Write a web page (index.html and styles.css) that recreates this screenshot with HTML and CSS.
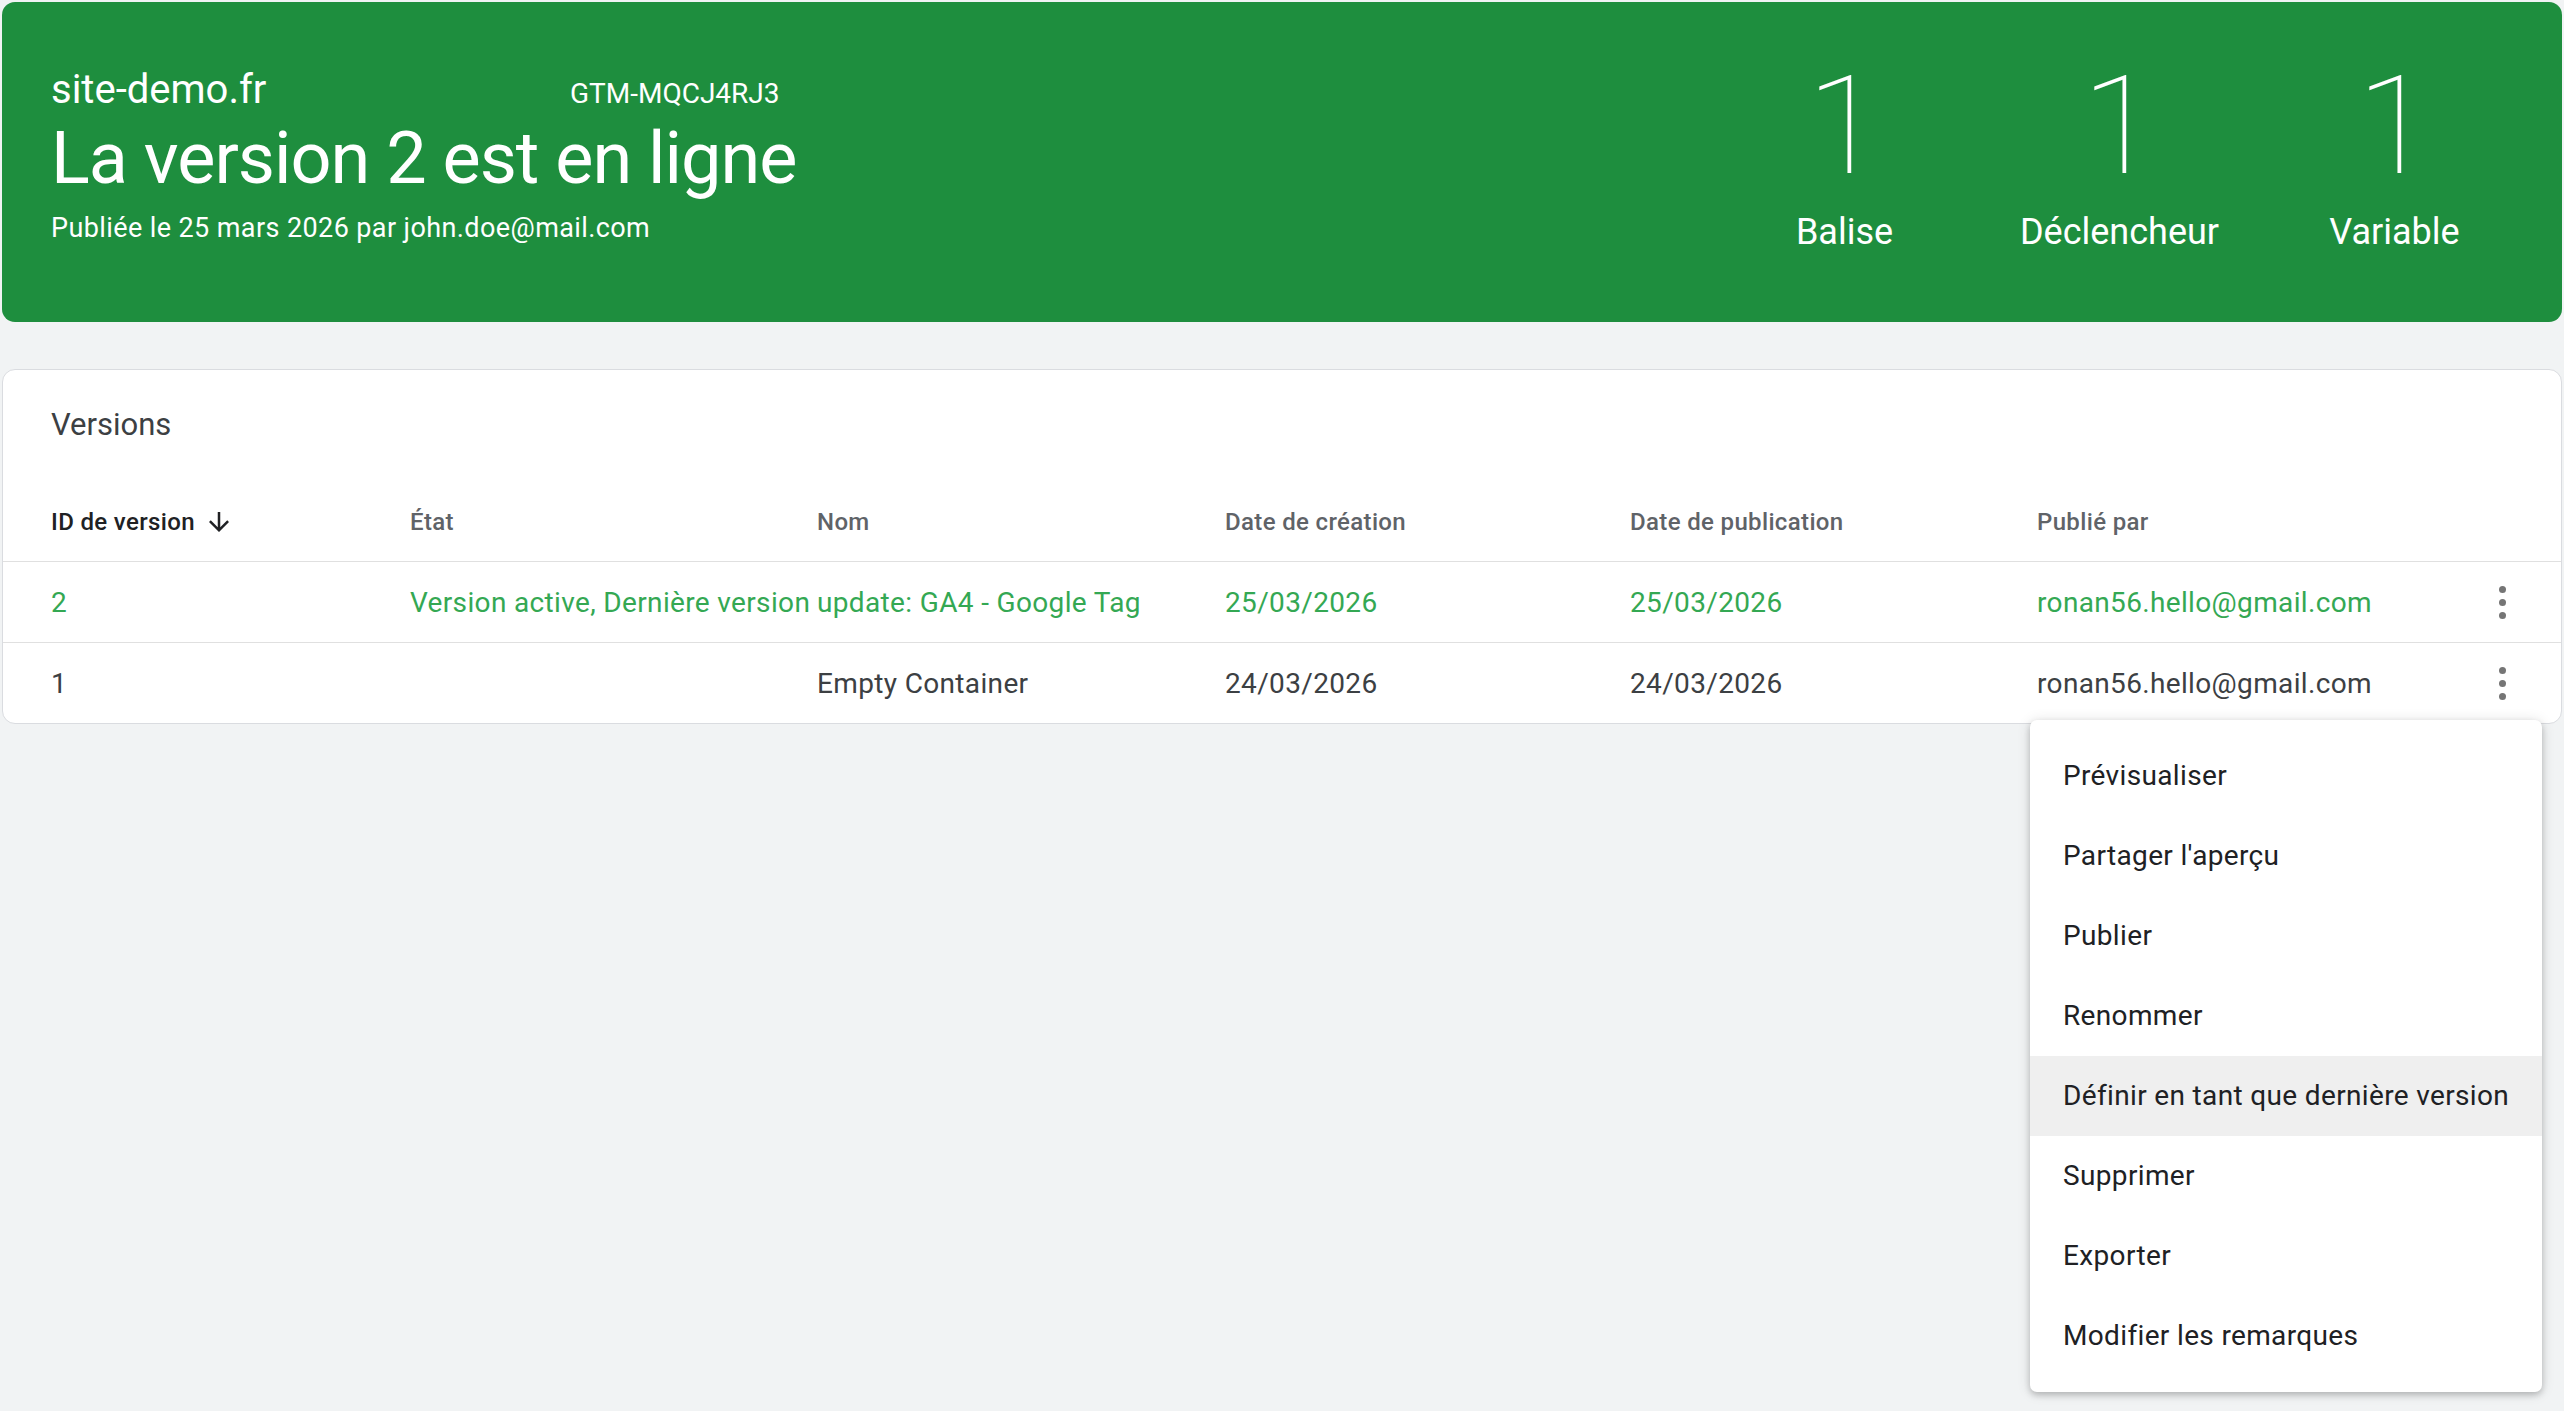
FILE: index.html
```html
<!DOCTYPE html>
<html lang="fr">

<head>
    <meta charset="UTF-8">
    <meta name="viewport" content="width=device-width, initial-scale=1.0">
    <title>Versions - site-demo.fr</title>
    <link rel="stylesheet" href="styles.css">
</head>

<body>

    <div class="page">
        <header class="banner">
            <div class="banner-info">
                <div class="banner-top">
                    <span class="site-name">site-demo.fr</span>
                    <span class="container-id">GTM-MQCJ4RJ3</span>
                </div>
                <h1 class="banner-title">La version 2 est en ligne</h1>
                <div class="banner-sub">Publiée le 25 mars 2026 par john.doe@mail.com</div>
            </div>

            <div class="stats">
                <div class="stat">
                    <div class="stat-num">1</div>
                    <div class="stat-label">Balise</div>
                </div>
                <div class="stat">
                    <div class="stat-num">1</div>
                    <div class="stat-label">Déclencheur</div>
                </div>
                <div class="stat">
                    <div class="stat-num">1</div>
                    <div class="stat-label">Variable</div>
                </div>
            </div>
        </header>

        <section class="card">
            <h2 class="card-title">Versions</h2>

            <div class="row head">
                <div class="cell sorted">ID de version
                    <svg class="sort-icon" viewBox="0 0 24 24"><path d="M20 12l-1.41-1.41L13 16.17V4h-2v12.17l-5.58-5.59L4 12l8 8 8-8z"/></svg>
                </div>
                <div class="cell">État</div>
                <div class="cell">Nom</div>
                <div class="cell">Date de création</div>
                <div class="cell">Date de publication</div>
                <div class="cell">Publié par</div>
                <div class="cell"></div>
            </div>

            <div class="row live">
                <div class="cell">2</div>
                <div class="cell">Version active, Dernière version</div>
                <div class="cell">update: GA4 - Google Tag</div>
                <div class="cell">25/03/2026</div>
                <div class="cell">25/03/2026</div>
                <div class="cell">ronan56.hello@gmail.com</div>
                <div class="cell kebab"><span></span><span></span><span></span></div>
            </div>

            <div class="row last">
                <div class="cell">1</div>
                <div class="cell"></div>
                <div class="cell">Empty Container</div>
                <div class="cell">24/03/2026</div>
                <div class="cell">24/03/2026</div>
                <div class="cell">ronan56.hello@gmail.com</div>
                <div class="cell kebab"><span></span><span></span><span></span></div>
            </div>
        </section>

        <!-- menu opened from the kebab of version 1 -->
        <ul class="menu">
            <li>Prévisualiser</li>
            <li>Partager l'aperçu</li>
            <li>Publier</li>
            <li>Renommer</li>
            <li class="hover">Définir en tant que dernière version</li>
            <li>Supprimer</li>
            <li>Exporter</li>
            <li>Modifier les remarques</li>
        </ul>
    </div>

</body>

</html>
```

FILE: styles.css
```css
body {
    margin: 0;
    padding: 0;
    font-family: Roboto, "Liberation Sans", sans-serif;
    background-color: #f1f3f4;
    color: #202124;
}

.page {
    position: relative;
    min-height: 100vh;
    box-sizing: border-box;
    padding: 2px;
}

/* green banner */
.banner {
    height: 320px;
    box-sizing: border-box;
    display: flex;
    justify-content: space-between;
    align-items: flex-start;
    padding: 55px 30px 0 49px;
    background-color: #1e8e3e;
    color: #fff;
    border-radius: 13px;
    margin-bottom: 47px;
}

.banner-info {
    padding-top: 9px;
}

.banner-top {
    display: flex;
    align-items: baseline;
}

.site-name {
    width: 519px;
    font-size: 40px;
    line-height: 48px;
}

.container-id {
    font-size: 28px;
}

.banner-title {
    margin: 1px 0 0;
    font-size: 72px;
    font-weight: 400;
    line-height: 88px;
    letter-spacing: -1px;
}

.banner-sub {
    margin-top: 7px;
    font-size: 27px;
    line-height: 36px;
    letter-spacing: 0.4px;
}

.stats {
    display: flex;
}

.stat {
    width: 275px;
    text-align: center;
}

.stat-num {
    font-size: 138px;
    font-weight: 100;
    line-height: 138px;
}

.stat-label {
    margin-top: 15px;
    font-size: 36px;
    line-height: 44px;
}

/* versions table */
.card {
    background: #fff;
    border: 1px solid #dadce0;
    border-radius: 13px;
}

.card-title {
    margin: 0;
    padding: 35px 0 37px 48px;
    font-size: 31px;
    font-weight: 400;
    line-height: 40px;
    color: #3c4043;
}

.row {
    display: grid;
    grid-template-columns: 359px 407px 408px 405px 407px 1fr 48px;
    align-items: center;
    height: 80px;
    padding: 0 35px 0 48px;
    border-bottom: 1px solid #e0e0e0;
    font-size: 28px;
    letter-spacing: 0.35px;
    color: #3c4043;
}

.row.head {
    height: 79px;
}

.row.last {
    border-bottom: none;
}

.cell {
    white-space: nowrap;
}

.row.head {
    font-size: 24px;
    font-weight: 500;
    color: #5f6368;
}

.row.head .sorted {
    display: flex;
    align-items: center;
    color: #202124;
}

.sort-icon {
    width: 30px;
    height: 30px;
    margin-left: 9px;
    fill: #202124;
}

.row.live {
    color: #34a853;
}

.kebab {
    display: flex;
    flex-direction: column;
    align-items: center;
    gap: 6px;
}

.kebab span {
    width: 7px;
    height: 7px;
    border-radius: 50%;
    background: #757575;
}

/* context menu */
.menu {
    position: absolute;
    top: 720px;
    right: 22px;
    width: 512px;
    margin: 0;
    padding: 16px 0 16px;
    list-style: none;
    background: #fff;
    border-radius: 7px;
    box-shadow: 0 3px 6px rgba(0, 0, 0, 0.2), 0 1px 14px rgba(0, 0, 0, 0.12);
}

.menu li {
    height: 80px;
    line-height: 80px;
    padding-left: 33px;
    font-size: 28px;
    letter-spacing: 0.35px;
    color: #202124;
}

.menu li.hover {
    background-color: #efefef;
}
```
